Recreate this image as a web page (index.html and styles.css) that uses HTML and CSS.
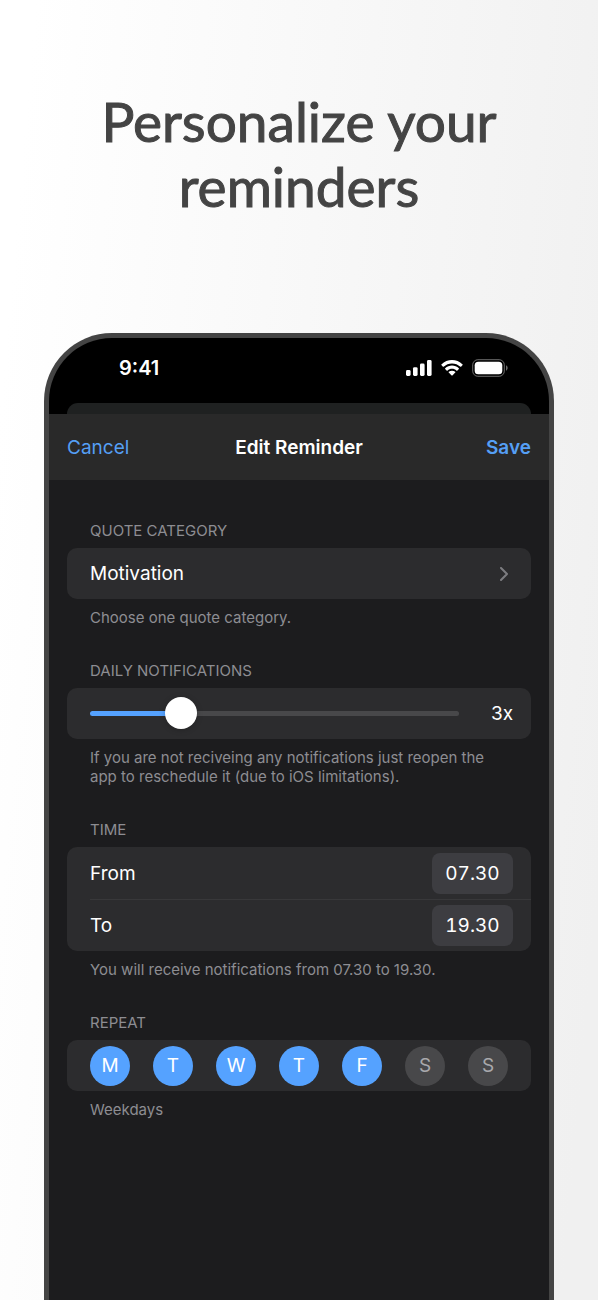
FILE: index.html
```html
<!DOCTYPE html>
<html lang="en">
<head>
    <meta charset="UTF-8">
    <meta name="viewport" content="width=device-width, initial-scale=1.0">
    <title>Edit Reminder</title>
    <link rel="stylesheet" href="styles.css">
</head>
<body>
    <h1 class="headline">Personalize your reminders</h1>

    <main class="phone">
        <div class="status-bar">
            <span class="clock">9:41</span>
            <div class="status-icons">
                <svg width="26" height="16" viewBox="0 0 26 16" fill="#fff" aria-hidden="true">
                    <rect x="0" y="10" width="4.6" height="6" rx="1.4"/>
                    <rect x="7" y="7.2" width="4.6" height="8.8" rx="1.4"/>
                    <rect x="14" y="3.6" width="4.6" height="12.4" rx="1.4"/>
                    <rect x="21" y="0" width="4.6" height="16" rx="1.4"/>
                </svg>
                <svg width="22" height="16" viewBox="0 0 17 12.3" fill="#fff" aria-hidden="true">
                    <path d="M8.5 2.6c2.4 0 4.7.9 6.5 2.6.1.1.3.1.5 0l1.2-1.3c.2-.1.2-.4 0-.5C12.1-1.1 4.9-1.1.3 3.4c-.2.1-.2.4 0 .5l1.2 1.3c.2.1.4.1.5 0 1.8-1.7 4.1-2.6 6.5-2.6z"/>
                    <path d="M8.5 6.8c1.3 0 2.6.5 3.5 1.4.2.1.4.1.5 0l1.3-1.3c.1-.2.1-.4 0-.5-3-2.9-7.6-2.9-10.6 0-.1.1-.1.3 0 .5l1.3 1.3c.1.1.3.1.5 0 .9-.9 2.2-1.4 3.5-1.4z"/>
                    <path d="M11 9.6c.1-.2.1-.4 0-.5-1.4-1.2-3.6-1.2-5 0-.1.1-.1.3 0 .5l2.2 2.3c.2.1.4.1.6 0z"/>
                </svg>
                <svg width="36" height="18" viewBox="0 0 36 18" aria-hidden="true">
                    <rect x=".7" y=".7" width="31.6" height="16.6" rx="5.2" fill="none" stroke="#6b6b6b"/>
                    <rect x="2.7" y="2.7" width="27.6" height="12.6" rx="3.6" fill="#fff"/>
                    <path d="M34 6.3v5.4c1-.5 1.7-1.5 1.7-2.7s-.7-2.2-1.7-2.7z" fill="#6b6b6b"/>
                </svg>
            </div>
        </div>
        <div class="sheet-behind"></div>

        <form class="sheet">
            <header class="nav">
                <button type="button" class="nav-button">Cancel</button>
                <h2 class="nav-title">Edit Reminder</h2>
                <button type="submit" class="nav-button nav-save">Save</button>
            </header>

            <div class="groups">
                <section class="group">
                    <h3 class="group-label">QUOTE CATEGORY</h3>
                    <button type="button" class="card row category">
                        Motivation
                        <svg class="chevron" width="10" height="14" viewBox="0 0 10 14" aria-hidden="true">
                            <path d="M2 1l6 6-6 6" fill="none" stroke="#7c7c80" stroke-width="2" stroke-linecap="round" stroke-linejoin="round"/>
                        </svg>
                    </button>
                    <p class="group-note">Choose one quote category.</p>
                </section>

                <section class="group">
                    <h3 class="group-label"><label for="count">DAILY NOTIFICATIONS</label></h3>
                    <div class="card row">
                        <input type="range" id="count" class="slider" min="1" max="10" value="3">
                        <output for="count">3x</output>
                    </div>
                    <p class="group-note">If you are not reciveing any notifications just reopen the app to reschedule it (due to iOS limitations).</p>
                </section>

                <section class="group">
                    <h3 class="group-label">TIME</h3>
                    <div class="card">
                        <div class="time-row">
                            <label for="from">From</label>
                            <input type="text" id="from" class="time" value="07.30">
                        </div>
                        <div class="time-row">
                            <label for="to">To</label>
                            <input type="text" id="to" class="time" value="19.30">
                        </div>
                    </div>
                    <p class="group-note">You will receive notifications from 07.30 to 19.30.</p>
                </section>

                <section class="group">
                    <h3 class="group-label">REPEAT</h3>
                    <div class="card row days">
                        <label class="day"><input type="checkbox" name="mon" checked><span>M</span></label>
                        <label class="day"><input type="checkbox" name="tue" checked><span>T</span></label>
                        <label class="day"><input type="checkbox" name="wed" checked><span>W</span></label>
                        <label class="day"><input type="checkbox" name="thu" checked><span>T</span></label>
                        <label class="day"><input type="checkbox" name="fri" checked><span>F</span></label>
                        <label class="day"><input type="checkbox" name="sat"><span>S</span></label>
                        <label class="day"><input type="checkbox" name="sun"><span>S</span></label>
                    </div>
                    <p class="group-note">Weekdays</p>
                </section>
            </div>
        </form>
    </main>
</body>
</html>
```
FILE: styles.css
```css
* {
    box-sizing: border-box;
}
body {
    display: flex;
    flex-direction: column;
    min-height: 100vh;
    margin: 0;
    padding: 89px 44px 0;
    background: linear-gradient(95deg, #fff 5%, #f0f0f0 95%);
    color: #fff;
    font-family: Inter, "Liberation Sans", sans-serif;
    font-size: 19px;
}
h1, h2, h3, p {
    margin: 0;
}
button, input {
    padding: 0;
    border: none;
    background: none;
    color: inherit;
    font: inherit;
}
button {
    cursor: pointer;
}
.headline {
    max-width: 440px;
    margin: 0 auto 114px;
    color: #444;
    font-family: Lato, "Open Sans", sans-serif;
    font-size: 55px;
    font-weight: 400;
    line-height: 65px;
    text-align: center;
    -webkit-text-stroke: 1px #444;
}

/* phone */
.phone {
    display: flex;
    flex: 1;
    flex-direction: column;
    overflow: hidden;
    border: 5px solid #444;
    border-bottom: none;
    border-radius: 68px 68px 0 0;
    background: #000;
}
.status-bar {
    display: flex;
    align-items: center;
    justify-content: space-between;
    height: 65px;
    padding: 0 41px 5px 70px;
}
.clock {
    font-size: 20px;
    font-weight: 600;
}
.status-icons {
    display: flex;
    align-items: center;
    gap: 9px;
}
.sheet-behind {
    height: 11px;
    margin: 0 18px;
    border-radius: 11px 11px 0 0;
    background: #1f2121;
}
.sheet {
    flex: 1;
    background: #1c1c1e;
}
.nav {
    display: grid;
    grid-template-columns: 1fr auto 1fr;
    align-items: center;
    height: 66px;
    padding: 0 18px;
    background: #292929;
}
.nav-button {
    justify-self: start;
    color: #559ff5;
}
.nav-title {
    font-size: 19px;
    font-weight: 600;
}
.nav-save {
    justify-self: end;
    font-weight: 600;
}

/* form groups */
.groups {
    display: flex;
    flex-direction: column;
    gap: 34px;
    padding: 41px 18px;
}
.group-label, .group-note {
    padding: 0 23px;
    color: #8d8d92;
    font-size: 15px;
    font-weight: 400;
}
.group-label {
    margin-bottom: 7px;
    line-height: 20px;
}
.group-note {
    margin-top: 9px;
    line-height: 19px;
}
.card {
    width: 100%;
    border-radius: 10px;
    background: #2c2c2e;
}
.row {
    display: flex;
    align-items: center;
    justify-content: space-between;
    height: 51px;
    padding: 0 18px 0 23px;
}
.category {
    padding-right: 22px;
}
.slider {
    flex: 1;
    height: 32px;
    margin: 0 32px 0 0;
    appearance: none;
}
.slider::-webkit-slider-runnable-track {
    height: 5px;
    border-radius: 3px;
    background: linear-gradient(to right, #55a2ff 25%, #48484a 25%);
}
.slider::-webkit-slider-thumb {
    width: 32px;
    height: 32px;
    margin-top: -14px;
    border-radius: 50%;
    background: #fff;
    box-shadow: 0 1px 6px rgba(0, 0, 0, 0.2);
    appearance: none;
}
.time-row {
    display: flex;
    align-items: center;
    justify-content: space-between;
    height: 52px;
    margin-left: 23px;
    padding-right: 18px;
}
.time-row + .time-row {
    border-top: 1px solid #38383a;
}
.time {
    width: 81px;
    height: 41px;
    border-radius: 8px;
    background: #3d3d41;
    font-variant-numeric: tabular-nums;
    text-align: center;
}
.days {
    padding-right: 23px;
}
.day input {
    position: absolute;
    opacity: 0;
}
.day span {
    display: flex;
    align-items: center;
    justify-content: center;
    width: 40px;
    height: 40px;
    border-radius: 50%;
    background: #48484a;
    color: #a9a9ac;
    cursor: pointer;
}
.day input:checked + span {
    background: #55a2ff;
    color: #fff;
}
```
